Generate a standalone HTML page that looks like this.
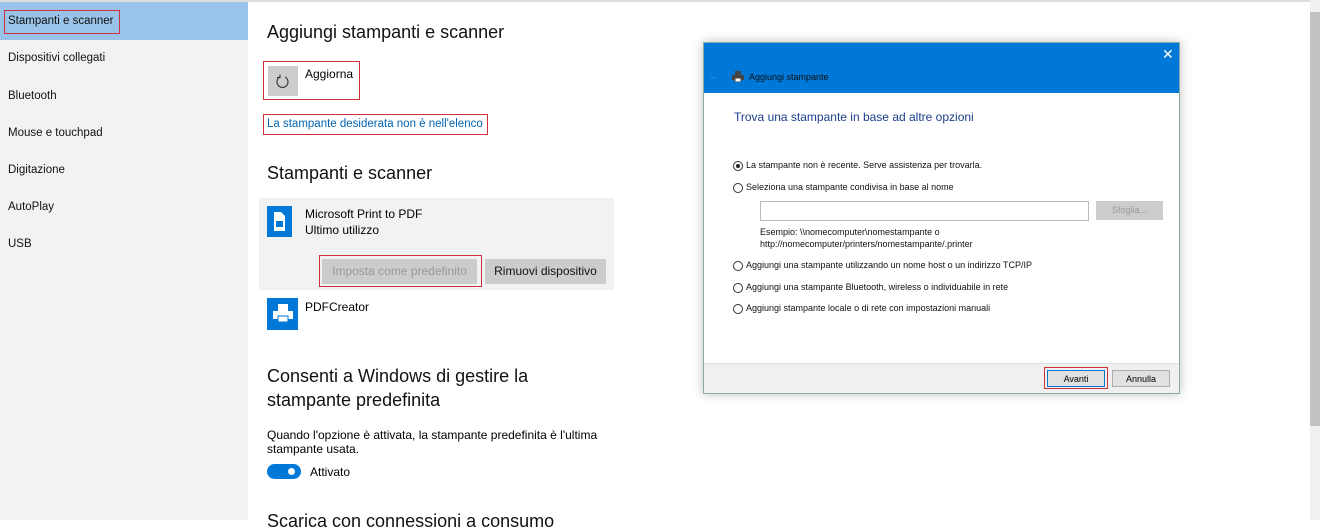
<!DOCTYPE html>
<html><head><meta charset="utf-8"><style>
*{margin:0;padding:0;box-sizing:border-box}
body{width:1320px;height:520px;overflow:hidden;background:#fff;font-family:"Liberation Sans",sans-serif;color:#000;position:relative}
.a{position:absolute;white-space:nowrap}
.side{left:0;top:2px;width:248px;height:518px;background:#f2f2f2}
.si{left:8px;font-size:11.5px;color:#111}
.red{position:absolute;border:1px solid #d0303c}
.h{font-size:18px;color:#111}
.dlg{left:703px;top:42px;width:477px;height:352px;background:#fff;border:1px solid #8aa;box-shadow:0 0 10px rgba(0,0,0,.25)}
.dt{font-size:9px;color:#111}
.rad{position:absolute;width:10px;height:10px;border:1px solid #333;border-radius:50%;background:#fff}
.btn{position:absolute;background:#e1e1e1;border:1px solid #adadad;font-size:9px;text-align:center;line-height:16px}
</style></head><body>
<div class="a" style="left:0;top:0;width:1320px;height:2px;background:#ddd"></div>
<div class="a side"></div>
<div class="a" style="left:0;top:2px;width:248px;height:38px;background:#99c3e9"></div>
<div class="red" style="left:4px;top:10px;width:116px;height:24px"></div>
<div class="a si" style="top:15px">Stampanti e scanner</div>
<div class="a si" style="top:52px">Dispositivi collegati</div>
<div class="a si" style="top:90px">Bluetooth</div>
<div class="a si" style="top:127px">Mouse e touchpad</div>
<div class="a si" style="top:164px">Digitazione</div>
<div class="a si" style="top:201px">AutoPlay</div>
<div class="a si" style="top:238px">USB</div>

<div class="a h" style="left:267px;top:22px">Aggiungi stampanti e scanner</div>
<div class="red" style="left:263px;top:61px;width:97px;height:39px"></div>
<div class="a" style="left:268px;top:66px;width:30px;height:30px;background:#ccc"></div>
<svg class="a" style="left:276px;top:73px" width="14" height="16" viewBox="0 0 14 16"><path d="M4 4 A5.5 5.5 0 1 0 9 4" fill="none" stroke="#333" stroke-width="1.1"/><path d="M4 1.5 V4.5 H1" fill="none" stroke="#333" stroke-width="1.1"/></svg>
<div class="a" style="left:305px;top:67px;font-size:12px">Aggiorna</div>
<div class="red" style="left:263px;top:114px;width:225px;height:21px"></div>
<div class="a" style="left:267px;top:118px;font-size:11.5px;color:#0063b1">La stampante desiderata non è nell'elenco</div>
<div class="a h" style="left:267px;top:163px">Stampanti e scanner</div>
<div class="a" style="left:259px;top:198px;width:355px;height:92px;background:#f2f2f2"></div>
<div class="a" style="left:267px;top:206px;width:25px;height:31px;background:#0078d7"></div>
<svg class="a" style="left:271px;top:210px" width="17" height="23"><path d="M3 2H10L14 6V21H3Z" fill="#fff"/><rect x="5" y="11" width="7" height="6" fill="#0078d7"/></svg>
<div class="a" style="left:305px;top:207px;font-size:12px">Microsoft Print to PDF</div>
<div class="a" style="left:305px;top:223px;font-size:12px">Ultimo utilizzo</div>
<div class="red" style="left:319px;top:255px;width:163px;height:32px"></div>
<div class="a" style="left:322px;top:259px;width:155px;height:25px;background:#ccc;color:#999;font-size:12px;text-align:center;line-height:25px">Imposta come predefinito</div>
<div class="a" style="left:485px;top:259px;width:121px;height:25px;background:#ccc;color:#111;font-size:12px;text-align:center;line-height:25px">Rimuovi dispositivo</div>
<div class="a" style="left:267px;top:298px;width:31px;height:32px;background:#0078d7"></div>
<svg class="a" style="left:271px;top:302px" width="24" height="24"><rect x="7" y="2" width="10" height="7" fill="#fff"/><rect x="2" y="9" width="20" height="8" fill="#fff"/><rect x="7" y="14" width="10" height="6" fill="#fff" stroke="#0078d7"/></svg>
<div class="a" style="left:305px;top:300px;font-size:12px">PDFCreator</div>
<div class="a h" style="left:267px;top:366px">Consenti a Windows di gestire la</div>
<div class="a h" style="left:267px;top:390px">stampante predefinita</div>
<div class="a" style="left:267px;top:428px;font-size:12px">Quando l'opzione è attivata, la stampante predefinita è l'ultima</div>
<div class="a" style="left:267px;top:442px;font-size:12px">stampante usata.</div>
<div class="a" style="left:267px;top:464px;width:34px;height:15px;border-radius:8px;background:#0078d7"></div>
<div class="a" style="left:288px;top:468px;width:7px;height:7px;border-radius:50%;background:#fff"></div>
<div class="a" style="left:310px;top:465px;font-size:12px">Attivato</div>
<div class="a h" style="left:267px;top:511px">Scarica con connessioni a consumo</div>

<div class="a" style="left:1310px;top:0;width:10px;height:520px;background:#f0f0f0"></div>
<div class="a" style="left:1310px;top:12px;width:10px;height:414px;background:#c2c2c2"></div>

<div class="a dlg">
<div class="a" style="left:0;top:0;width:475px;height:50px;background:#0078d7"></div>
<div class="a" style="left:458px;top:3px;color:#fff;font-size:14px">✕</div>
<div class="a" style="left:5px;top:28px;color:#4aa0e8;font-size:9px">←</div>
<svg class="a" style="left:28px;top:28px" width="12" height="11"><rect x="3" y="0" width="6" height="4" fill="#444"/><rect x="0" y="4" width="12" height="5" fill="#444"/><rect x="3" y="7" width="6" height="4" fill="#fff" stroke="#444"/></svg>
<div class="a dt" style="left:45px;top:29px">Aggiungi stampante</div>
<div class="a" style="left:30px;top:67px;font-size:12px;color:#1b3f8b">Trova una stampante in base ad altre opzioni</div>
<div class="rad" style="left:29px;top:118px"></div><div class="a" style="left:32px;top:121px;width:4px;height:4px;border-radius:50%;background:#222"></div>
<div class="a dt" style="left:42px;top:117px">La stampante non è recente. Serve assistenza per trovarla.</div>
<div class="rad" style="left:29px;top:140px"></div>
<div class="a dt" style="left:42px;top:139px">Seleziona una stampante condivisa in base al nome</div>
<div class="a" style="left:56px;top:158px;width:329px;height:20px;border:1px solid #bbb"></div>
<div class="btn" style="left:392px;top:158px;width:67px;height:19px;color:#999;background:#ccc;border-color:#ccc">Sfoglia...</div>
<div class="a dt" style="left:56px;top:184px">Esempio: \\nomecomputer\nomestampante o</div>
<div class="a dt" style="left:56px;top:196px">http://nomecomputer/printers/nomestampante/.printer</div>
<div class="rad" style="left:29px;top:218px"></div>
<div class="a dt" style="left:42px;top:217px">Aggiungi una stampante utilizzando un nome host o un indirizzo TCP/IP</div>
<div class="rad" style="left:29px;top:240px"></div>
<div class="a dt" style="left:42px;top:239px">Aggiungi una stampante Bluetooth, wireless o individuabile in rete</div>
<div class="rad" style="left:29px;top:261px"></div>
<div class="a dt" style="left:42px;top:260px">Aggiungi stampante locale o di rete con impostazioni manuali</div>
<div class="a" style="left:0;top:320px;width:475px;height:30px;background:#f0f0f0;border-top:1px solid #e0e0e0"></div>
<div class="red" style="left:340px;top:324px;width:64px;height:22px"></div>
<div class="btn" style="left:343px;top:327px;width:58px;height:17px;border-color:#0078d7">Avanti</div>
<div class="btn" style="left:408px;top:327px;width:58px;height:17px">Annulla</div>
</div>
</body></html>
